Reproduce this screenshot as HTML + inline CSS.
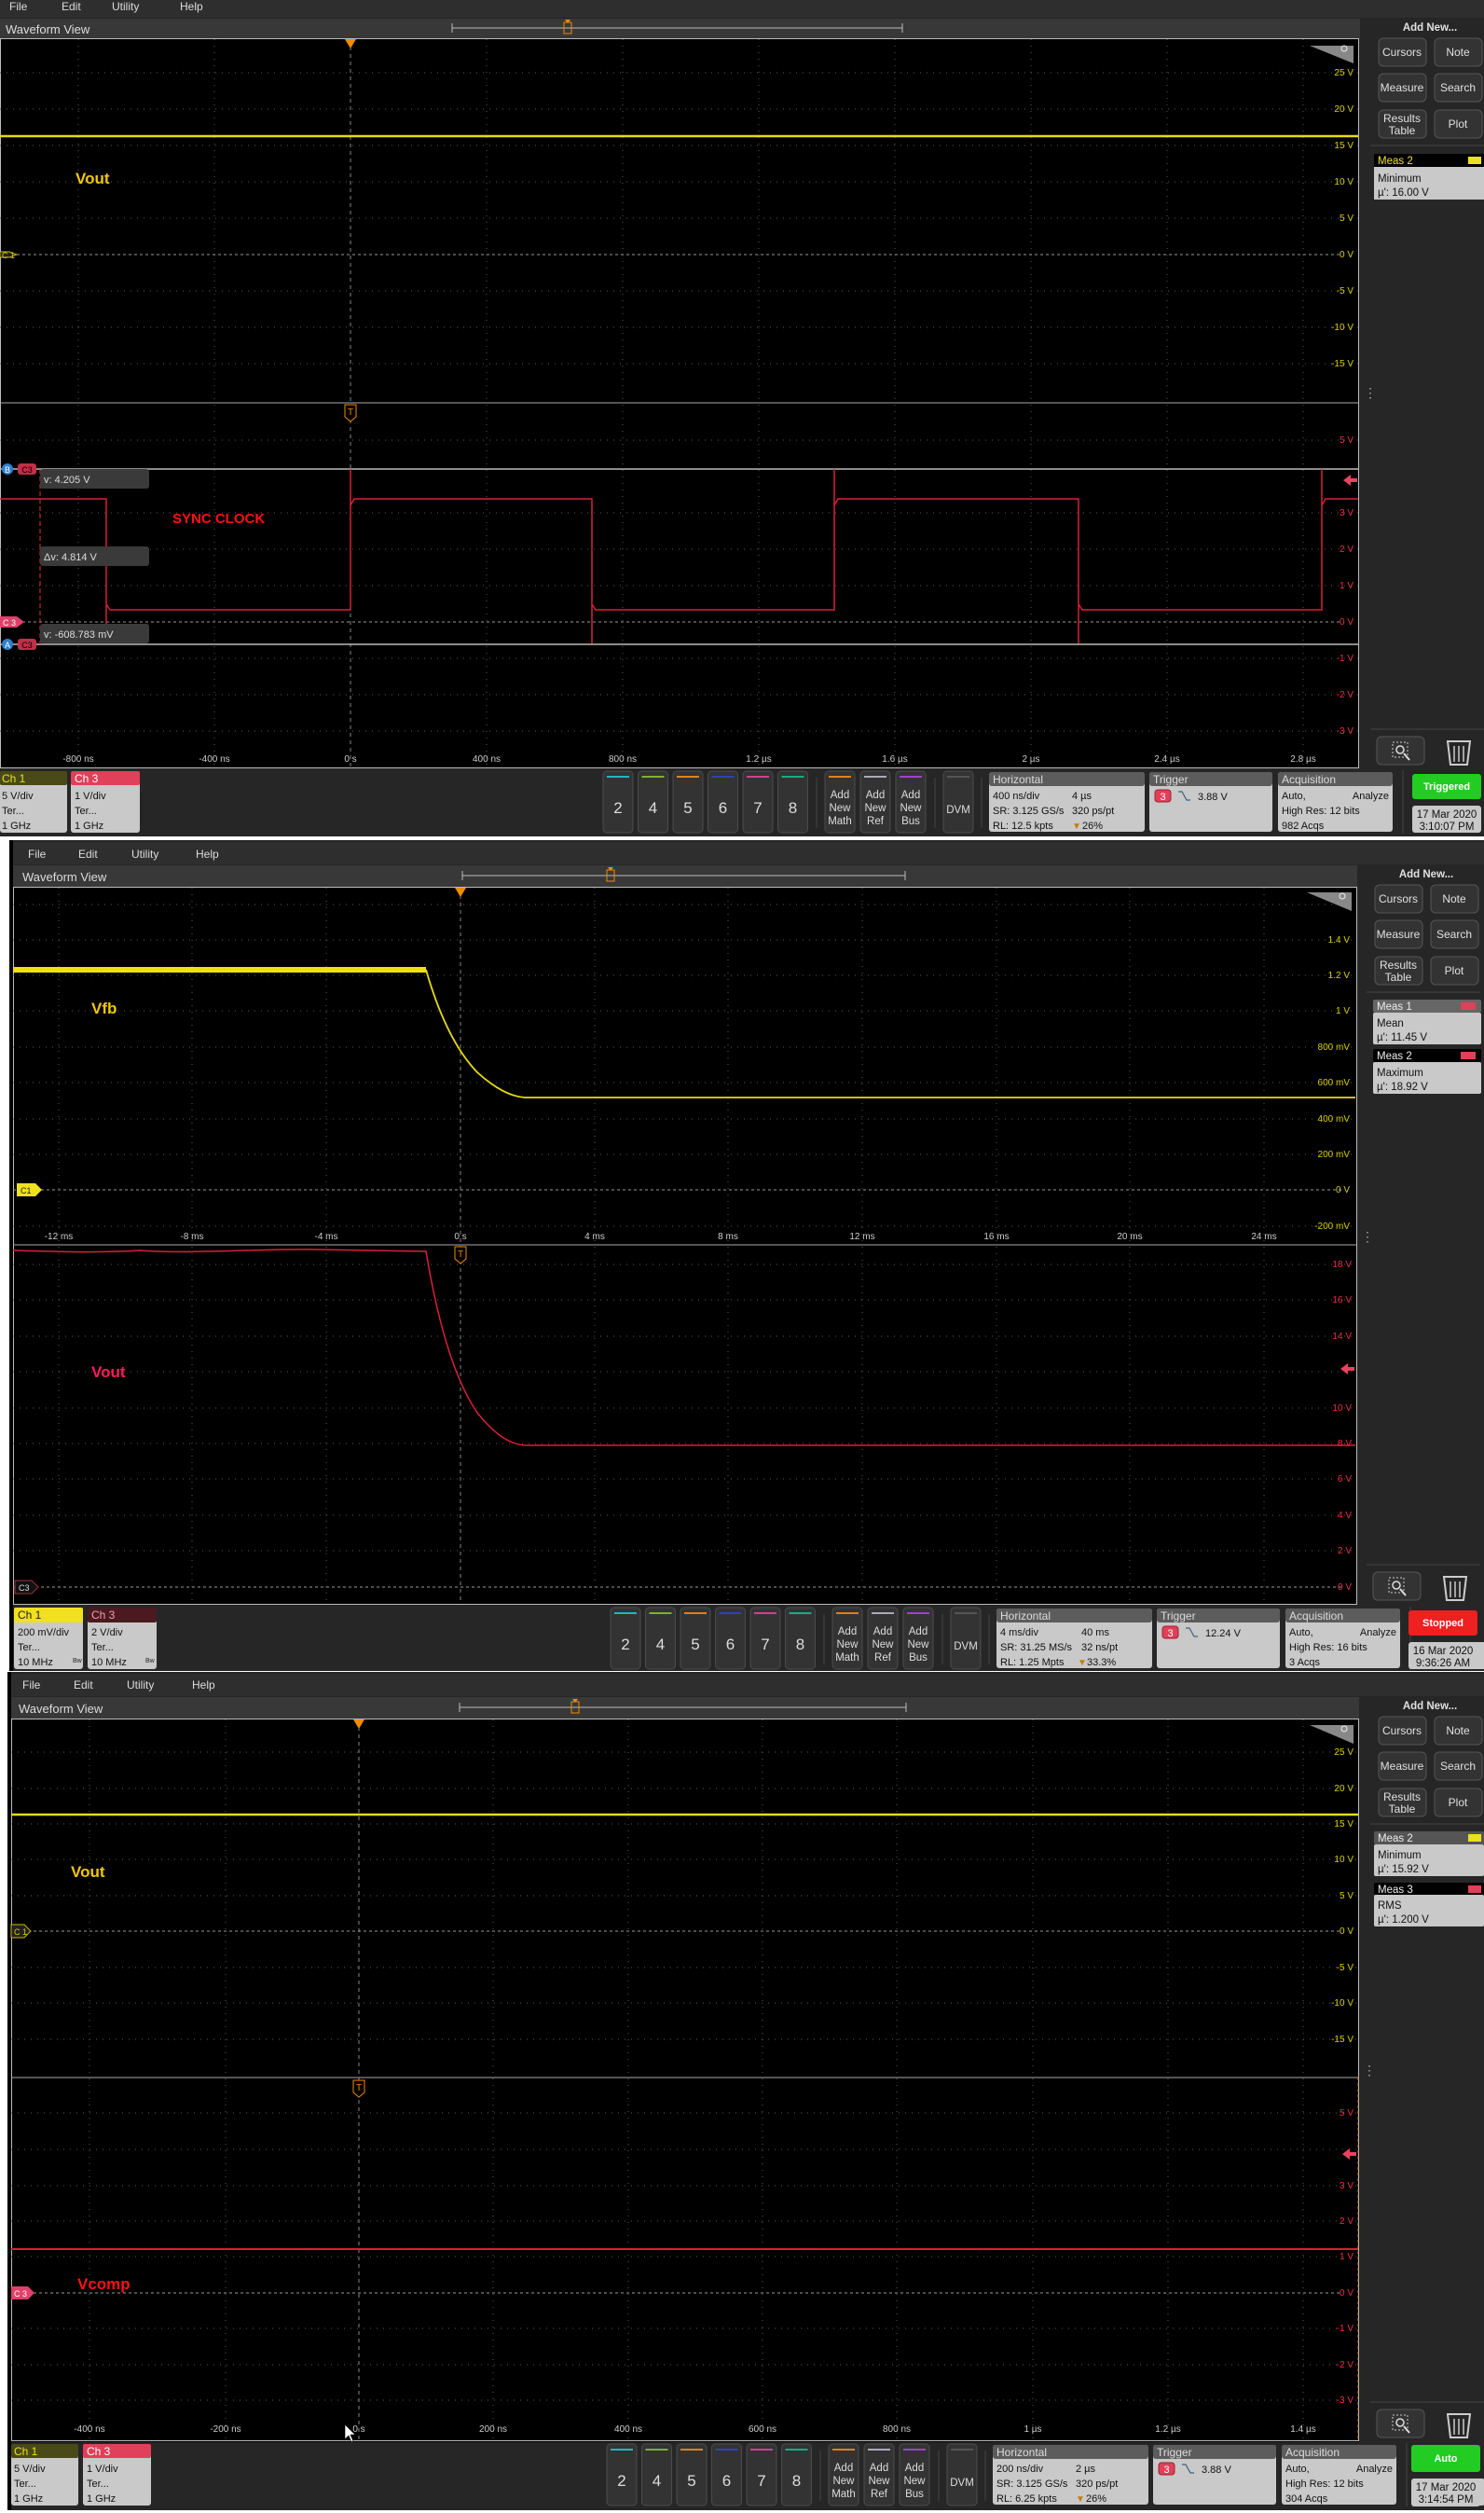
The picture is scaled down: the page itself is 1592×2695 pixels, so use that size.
<!DOCTYPE html>
<html><head><meta charset="utf-8"><style>
html,body{margin:0;padding:0;background:#fff}
svg{display:block;font-family:"Liberation Sans",sans-serif}
.m{fill:#ddd;font-size:12px}
.t{fill:#ddd;font-size:13px}
.ay{fill:#d8cf00;font-size:10px;text-anchor:end}
.ar{fill:#e8304e;font-size:10px;text-anchor:end}
.tl{fill:#ccc;font-size:10px;text-anchor:middle}
.g{stroke:#5a5a5a;stroke-width:1;stroke-dasharray:1 6}
.z{stroke:#9a9a9a;stroke-width:1;stroke-dasharray:3 3}
.sb{fill:#333;stroke:#555;rx:5}
.sbt{fill:#e0e0e0;font-size:12px;text-anchor:middle}
.bt{fill:#333;stroke:#4c4c4c;rx:4}
.bn{fill:#ddd;font-size:17px;text-anchor:middle}
.bs{fill:#ddd;font-size:11.5px;text-anchor:middle}
.hd{fill:#ddd;font-size:12px}
.bd{fill:#111;font-size:11px}
</style></head><body>
<svg width="1592" height="2695" viewBox="0 0 1592 2695" xmlns="http://www.w3.org/2000/svg">
<defs>
<g id="sideBtns">
 <text x="1534" y="13" class="sbt" font-weight="bold" style="font-size:11.5px">Add New...</text>
 <rect x="1479" y="21" width="51" height="30" class="sb"/><text x="1504" y="40" class="sbt">Cursors</text>
 <rect x="1539" y="21" width="51" height="30" class="sb"/><text x="1564" y="40" class="sbt">Note</text>
 <rect x="1479" y="59" width="51" height="30" class="sb"/><text x="1504" y="78" class="sbt">Measure</text>
 <rect x="1539" y="59" width="51" height="30" class="sb"/><text x="1564" y="78" class="sbt">Search</text>
 <rect x="1479" y="98" width="51" height="30" class="sb"/><text x="1504" y="111" class="sbt">Results</text><text x="1504" y="124" class="sbt">Table</text>
 <rect x="1539" y="98" width="51" height="30" class="sb"/><text x="1564" y="117" class="sbt">Plot</text>
 <line x1="1470" y1="136" x2="1592" y2="136" stroke="#444"/>
</g>
<g id="sideIcons">
 <rect x="1477" y="0" width="51" height="30" class="sb"/>
 <rect x="1494" y="6" width="16" height="16" fill="none" stroke="#ccc" stroke-dasharray="2 2"/>
 <circle cx="1502" cy="14" r="4" fill="none" stroke="#ddd" stroke-width="1.5"/>
 <path d="M1506 18 L1512 25" stroke="#ddd" stroke-width="2"/>
 <path d="M1553 5 H1577 L1574 30 H1556 Z" fill="none" stroke="#ccc" stroke-width="2"/>
 <path d="M1560 10 V27 M1565 10 V27 M1570 10 V27" stroke="#ccc" stroke-width="1.5"/>
 <line x1="1470" y1="-8" x2="1592" y2="-8" stroke="#444"/>
</g>
<g id="bar">
 <rect x="647" y="1" width="32" height="66" class="bt"/><line x1="651" y1="7" x2="675" y2="7" stroke="#1fb8c0" stroke-width="2"/><text x="663" y="46" class="bn">2</text>
 <rect x="684.5" y="1" width="32" height="66" class="bt"/><line x1="688.5" y1="7" x2="712.5" y2="7" stroke="#80b030" stroke-width="2"/><text x="700.5" y="46" class="bn">4</text>
 <rect x="722" y="1" width="32" height="66" class="bt"/><line x1="726" y1="7" x2="750" y2="7" stroke="#e08020" stroke-width="2"/><text x="738" y="46" class="bn">5</text>
 <rect x="759.5" y="1" width="32" height="66" class="bt"/><line x1="763.5" y1="7" x2="787.5" y2="7" stroke="#3040c0" stroke-width="2"/><text x="775.5" y="46" class="bn">6</text>
 <rect x="797" y="1" width="32" height="66" class="bt"/><line x1="801" y1="7" x2="825" y2="7" stroke="#d04090" stroke-width="2"/><text x="813" y="46" class="bn">7</text>
 <rect x="834.5" y="1" width="32" height="66" class="bt"/><line x1="838.5" y1="7" x2="862.5" y2="7" stroke="#10b080" stroke-width="2"/><text x="850.5" y="46" class="bn">8</text>
 <line x1="876" y1="8" x2="876" y2="62" stroke="#444"/>
 <rect x="885" y="1" width="32" height="66" class="bt"/><line x1="889" y1="7" x2="913" y2="7" stroke="#e08020" stroke-width="2"/><text x="901" y="30" class="bs">Add</text><text x="901" y="44" class="bs">New</text><text x="901" y="58" class="bs">Math</text>
 <rect x="923" y="1" width="32" height="66" class="bt"/><line x1="927" y1="7" x2="951" y2="7" stroke="#aab" stroke-width="2"/><text x="939" y="30" class="bs">Add</text><text x="939" y="44" class="bs">New</text><text x="939" y="58" class="bs">Ref</text>
 <rect x="961" y="1" width="32" height="66" class="bt"/><line x1="965" y1="7" x2="989" y2="7" stroke="#a040d0" stroke-width="2"/><text x="977" y="30" class="bs">Add</text><text x="977" y="44" class="bs">New</text><text x="977" y="58" class="bs">Bus</text>
 <line x1="1003" y1="8" x2="1003" y2="62" stroke="#444"/>
 <rect x="1012" y="1" width="32" height="66" class="bt"/><line x1="1016" y1="7" x2="1040" y2="7" stroke="#555" stroke-width="2"/><text x="1028" y="46" class="bs">DVM</text>
 <line x1="1053" y1="8" x2="1053" y2="62" stroke="#444"/>
 <rect x="1061" y="2" width="167" height="64" rx="3" fill="#c9c9c9"/><rect x="1061" y="2" width="167" height="15" rx="3" fill="#5c5c5c"/><text x="1065" y="14" class="hd">Horizontal</text>
 <rect x="1233" y="2" width="132" height="64" rx="3" fill="#c9c9c9"/><rect x="1233" y="2" width="132" height="15" rx="3" fill="#5c5c5c"/><text x="1237" y="14" class="hd">Trigger</text>
 <rect x="1239" y="21" width="17" height="13" rx="3" fill="#e0405a" stroke="#a02030"/><text x="1247.5" y="32" style="fill:#fff;font-size:11px;text-anchor:middle">3</text>
 <path d="M1264 23 L1268 23 L1273 32 L1277 32" stroke="#406080" fill="none" stroke-width="1.2"/>
 <rect x="1371" y="2" width="123" height="64" rx="3" fill="#c9c9c9"/><rect x="1371" y="2" width="123" height="15" rx="3" fill="#5c5c5c"/><text x="1375" y="14" class="hd">Acquisition</text>
 <line x1="1505" y1="0" x2="1505" y2="68" stroke="#444"/>
 <rect x="1515" y="38" width="74" height="29" rx="3" fill="#c9c9c9"/>
</g>
</defs>

<!-- ================= PANEL 1 ================= -->
<rect x="0" y="0" width="1592" height="897" fill="#262626"/>
<rect x="0" y="0" width="1592" height="19" fill="#2e2e2e"/>
<text x="10" y="11" class="m">File</text><text x="66" y="11" class="m">Edit</text><text x="120" y="11" class="m">Utility</text><text x="193" y="11" class="m">Help</text>
<rect x="0" y="20" width="1459" height="21" fill="#383838"/>
<text x="6" y="36" class="t">Waveform View</text>
<path d="M485 25 V35 M485 30 H968 M968 25 V35" stroke="#bbb" fill="none"/>
<rect x="605" y="24" width="8" height="12" fill="none" stroke="#f08c00"/><path d="M606 21 H612 L609 25Z" fill="#f08c00"/>
<rect x="0" y="41" width="1458" height="783" fill="#000"/>
<rect x="0.5" y="41.5" width="1457" height="782" fill="none" stroke="#bbb"/>
<g class="g">
 <line x1="84" y1="42" x2="84" y2="822"/><line x1="230" y1="42" x2="230" y2="822"/><line x1="522" y1="42" x2="522" y2="822"/><line x1="668" y1="42" x2="668" y2="822"/><line x1="814" y1="42" x2="814" y2="822"/><line x1="960" y1="42" x2="960" y2="822"/><line x1="1106" y1="42" x2="1106" y2="822"/><line x1="1252" y1="42" x2="1252" y2="822"/><line x1="1398" y1="42" x2="1398" y2="822"/>
 <line x1="0" y1="78" x2="1457" y2="78"/><line x1="0" y1="117" x2="1457" y2="117"/><line x1="0" y1="156" x2="1457" y2="156"/><line x1="0" y1="195" x2="1457" y2="195"/><line x1="0" y1="234" x2="1457" y2="234"/><line x1="0" y1="312" x2="1457" y2="312"/><line x1="0" y1="351" x2="1457" y2="351"/><line x1="0" y1="390" x2="1457" y2="390"/>
 <line x1="0" y1="472" x2="1457" y2="472"/><line x1="0" y1="550" x2="1457" y2="550"/><line x1="0" y1="589" x2="1457" y2="589"/><line x1="0" y1="628" x2="1457" y2="628"/><line x1="0" y1="706" x2="1457" y2="706"/><line x1="0" y1="745" x2="1457" y2="745"/><line x1="0" y1="784" x2="1457" y2="784"/>
</g>
<line x1="376" y1="42" x2="376" y2="822" stroke="#888" stroke-dasharray="4 4"/>
<line x1="0" y1="273" x2="1440" y2="273" class="z"/>
<line x1="0" y1="667" x2="1440" y2="667" class="z"/>
<line x1="0" y1="432" x2="1457" y2="432" stroke="#aaa"/>
<path d="M370 42 H382 L376 52Z" fill="#f08c00"/>
<path d="M1405 49 H1452 L1452 68Z" fill="#888"/><circle cx="1442" cy="52" r="3" fill="none" stroke="#eee"/>
<text x="1452" y="81" class="ay">25 V</text><text x="1452" y="120" class="ay">20 V</text><text x="1452" y="159" class="ay">15 V</text><text x="1452" y="198" class="ay">10 V</text><text x="1452" y="237" class="ay">5 V</text><text x="1452" y="276" class="ay">0 V</text><text x="1452" y="315" class="ay">-5 V</text><text x="1452" y="354" class="ay">-10 V</text><text x="1452" y="393" class="ay">-15 V</text>
<text x="1452" y="475" class="ar">5 V</text><text x="1452" y="553" class="ar">3 V</text><text x="1452" y="592" class="ar">2 V</text><text x="1452" y="631" class="ar">1 V</text><text x="1452" y="670" class="ar">0 V</text><text x="1452" y="709" class="ar">-1 V</text><text x="1452" y="748" class="ar">-2 V</text><text x="1452" y="787" class="ar">-3 V</text>
<text x="84" y="817" class="tl">-800 ns</text><text x="230" y="817" class="tl">-400 ns</text><text x="376" y="817" class="tl">0 s</text><text x="522" y="817" class="tl">400 ns</text><text x="668" y="817" class="tl">800 ns</text><text x="814" y="817" class="tl">1.2 µs</text><text x="960" y="817" class="tl">1.6 µs</text><text x="1106" y="817" class="tl">2 µs</text><text x="1252" y="817" class="tl">2.4 µs</text><text x="1398" y="817" class="tl">2.8 µs</text>
<line x1="0" y1="146" x2="1457" y2="146" stroke="#e6dc10" stroke-width="2.5"/>
<text x="81" y="197" style="fill:#f0c800;font-size:17px;font-weight:bold">Vout</text>
<path d="M0 270 H10 L18 273 L10 276 H0Z" fill="#222" stroke="#c8b800"/><text x="2" y="277" style="fill:#d8cf00;font-size:9px">C 1</text>
<path d="M370 434 H382 V447 L376 452 L370 447Z" fill="#000" stroke="#f08c00"/><text x="376" y="445" style="fill:#f08c00;font-size:10px;text-anchor:middle">T</text>
<line x1="0" y1="503" x2="1457" y2="503" stroke="#bbb" stroke-width="1.5"/>
<line x1="0" y1="691" x2="1457" y2="691" stroke="#bbb" stroke-width="1.5"/>
<line x1="43" y1="503" x2="43" y2="691" stroke="#e03050" stroke-dasharray="5 3"/>
<path d="M0 535 H114 V690 V648 L118 654 H376 V503 V542 L380 535 H635 V690 V648 L639 654 H895 V503 V542 L899 535 H1157 V690 V648 L1161 654 H1418 V503 V542 L1422 535 H1457" fill="none" stroke="#d82038" stroke-width="1.5"/>
<text x="185" y="561" style="fill:#ff1010;font-size:15px;font-weight:bold">SYNC CLOCK</text>
<rect x="43" y="503" width="117" height="21" rx="3" fill="#3a3a3a"/><text x="47" y="518" style="fill:#ddd;font-size:11px">v: 4.205 V</text>
<rect x="43" y="586" width="117" height="21" rx="3" fill="#3a3a3a"/><text x="47" y="601" style="fill:#ddd;font-size:11px">Δv: 4.814 V</text>
<rect x="43" y="669" width="117" height="21" rx="3" fill="#3a3a3a"/><text x="47" y="684" style="fill:#ddd;font-size:11px">v: -608.783 mV</text>
<circle cx="8" cy="503" r="6" fill="#3080d0"/><text x="8" y="507" style="fill:#fff;font-size:9px;text-anchor:middle">B</text>
<rect x="19" y="497" width="20" height="12" rx="3" fill="#c03048"/><text x="29" y="507" style="fill:#000;font-size:9px;text-anchor:middle">C3</text>
<circle cx="8" cy="691" r="6" fill="#3080d0"/><text x="8" y="695" style="fill:#fff;font-size:9px;text-anchor:middle">A</text>
<rect x="19" y="685" width="20" height="12" rx="3" fill="#c03048"/><text x="29" y="695" style="fill:#000;font-size:9px;text-anchor:middle">C3</text>
<path d="M0 661 H18 L26 667 L18 673 H0Z" fill="#e0406a"/><text x="3" y="671" style="fill:#fff;font-size:9px">C 3</text>
<path d="M1441 515 L1449 509 V513 H1456 V517 H1449 V521Z" fill="#f04060"/>
<text x="1463" y="426" style="fill:#aaa;font-size:14px">⋮</text>
<use href="#sideBtns" transform="translate(0,20)"/>
<rect x="1474" y="165" width="118" height="14" fill="#000"/><text x="1478" y="176" style="fill:#f0e020;font-size:11.5px">Meas 2</text><rect x="1575" y="168" width="14" height="8" fill="#e8e020"/>
<rect x="1474" y="179" width="118" height="35" fill="#c9c9c9"/><text x="1478" y="195" class="bd" style="font-size:11.5px">Minimum</text><text x="1478" y="210" class="bd" style="font-size:11.5px">µ': 16.00 V</text>
<use href="#sideIcons" transform="translate(0,790)"/>
<g transform="translate(0,826)">
 <use href="#bar"/>
 <rect x="0" y="1" width="72" height="66" rx="3" fill="#c9c9c9"/><rect x="0" y="1" width="72" height="15" rx="2" fill="#4a4a18"/><text x="2" y="13" style="fill:#e8e020;font-size:12px">Ch 1</text>
 <text x="2" y="31" class="bd">5 V/div</text><text x="2" y="47" class="bd">Ter...</text><text x="2" y="63" class="bd">1 GHz</text>
 <rect x="76" y="1" width="74" height="66" rx="3" fill="#c9c9c9"/><rect x="76" y="1" width="74" height="15" rx="2" fill="#e0405a"/><text x="80" y="13" style="fill:#fff;font-size:12px">Ch 3</text>
 <text x="80" y="31" class="bd">1 V/div</text><text x="80" y="47" class="bd">Ter...</text><text x="80" y="63" class="bd">1 GHz</text>
 <text x="1065" y="31" class="bd">400 ns/div</text><text x="1150" y="31" class="bd">4 µs</text><text x="1065" y="47" class="bd">SR: 3.125 GS/s</text><text x="1150" y="47" class="bd">320 ps/pt</text><text x="1065" y="63" class="bd">RL: 12.5 kpts</text><text x="1150" y="63" style="fill:#c08000;font-size:10px">▼</text><text x="1161" y="63" class="bd">26%</text>
 <text x="1285" y="32" class="bd">3.88 V</text>
 <text x="1375" y="31" class="bd">Auto,</text><text x="1490" y="31" class="bd" text-anchor="end">Analyze</text><text x="1375" y="47" class="bd">High Res: 12 bits</text><text x="1375" y="63" class="bd">982 Acqs</text>
 <rect x="1515" y="4" width="74" height="27" rx="3" fill="#22cc22"/><text x="1552" y="21" style="fill:#fff;font-size:11px;font-weight:bold;text-anchor:middle">Triggered</text>
 <text x="1552" y="51" class="bd" text-anchor="middle" style="font-size:11.5px">17 Mar 2020</text><text x="1552" y="64" class="bd" text-anchor="middle" style="font-size:11.5px">3:10:07 PM</text>
</g>

<!-- ================= PANEL 2 ================= -->
<rect x="10" y="901" width="1582" height="891" fill="#262626"/>
<rect x="10" y="901" width="4" height="891" fill="#000"/>
<rect x="14" y="903" width="1578" height="24" fill="#2e2e2e"/>
<text x="30" y="920" class="m">File</text><text x="84" y="920" class="m">Edit</text><text x="141" y="920" class="m">Utility</text><text x="210" y="920" class="m">Help</text>
<rect x="14" y="928" width="1442" height="23" fill="#383838"/>
<text x="24" y="945" class="t">Waveform View</text>
<path d="M496 934 V944 M496 939 H971 M971 934 V944" stroke="#bbb" fill="none"/>
<rect x="651" y="933" width="8" height="12" fill="none" stroke="#f08c00"/><path d="M652 930 H658 L655 934Z" fill="#f08c00"/>
<rect x="14" y="951" width="1442" height="770" fill="#000"/>
<rect x="14.5" y="951.5" width="1441" height="769" fill="none" stroke="#bbb"/>
<g class="g">
 <line x1="63" y1="952" x2="63" y2="1720"/><line x1="206" y1="952" x2="206" y2="1720"/><line x1="350" y1="952" x2="350" y2="1720"/><line x1="638" y1="952" x2="638" y2="1720"/><line x1="781" y1="952" x2="781" y2="1720"/><line x1="925" y1="952" x2="925" y2="1720"/><line x1="1069" y1="952" x2="1069" y2="1720"/><line x1="1212" y1="952" x2="1212" y2="1720"/><line x1="1356" y1="952" x2="1356" y2="1720"/>
 <line x1="14" y1="970" x2="1454" y2="970"/><line x1="14" y1="1008" x2="1454" y2="1008"/><line x1="14" y1="1046" x2="1454" y2="1046"/><line x1="14" y1="1084" x2="1454" y2="1084"/><line x1="14" y1="1123" x2="1454" y2="1123"/><line x1="14" y1="1161" x2="1454" y2="1161"/><line x1="14" y1="1200" x2="1454" y2="1200"/><line x1="14" y1="1238" x2="1454" y2="1238"/><line x1="14" y1="1315" x2="1454" y2="1315"/>
 <line x1="14" y1="1356" x2="1454" y2="1356"/><line x1="14" y1="1394" x2="1454" y2="1394"/><line x1="14" y1="1433" x2="1454" y2="1433"/><line x1="14" y1="1471" x2="1454" y2="1471"/><line x1="14" y1="1510" x2="1454" y2="1510"/><line x1="14" y1="1548" x2="1454" y2="1548"/><line x1="14" y1="1586" x2="1454" y2="1586"/><line x1="14" y1="1625" x2="1454" y2="1625"/><line x1="14" y1="1663" x2="1454" y2="1663"/>
</g>
<line x1="494" y1="952" x2="494" y2="1720" stroke="#888" stroke-dasharray="4 4"/>
<line x1="14" y1="1276" x2="1440" y2="1276" class="z"/>
<line x1="14" y1="1702" x2="1440" y2="1702" class="z"/>
<line x1="14" y1="1335" x2="1456" y2="1335" stroke="#aaa"/>
<path d="M488 952 H500 L494 962Z" fill="#f08c00"/>
<path d="M1402 957 H1450 L1450 977Z" fill="#888"/><circle cx="1440" cy="961" r="3" fill="none" stroke="#eee"/>
<text x="1448" y="1011" class="ay">1.4 V</text><text x="1448" y="1049" class="ay">1.2 V</text><text x="1448" y="1087" class="ay">1 V</text><text x="1448" y="1126" class="ay">800 mV</text><text x="1448" y="1164" class="ay">600 mV</text><text x="1448" y="1203" class="ay">400 mV</text><text x="1448" y="1241" class="ay">200 mV</text><text x="1448" y="1279" class="ay">0 V</text><text x="1448" y="1318" class="ay">-200 mV</text>
<text x="1450" y="1359" class="ar">18 V</text><text x="1450" y="1397" class="ar">16 V</text><text x="1450" y="1436" class="ar">14 V</text><text x="1450" y="1513" class="ar">10 V</text><text x="1450" y="1551" class="ar">8 V</text><text x="1450" y="1589" class="ar">6 V</text><text x="1450" y="1628" class="ar">4 V</text><text x="1450" y="1666" class="ar">2 V</text><text x="1450" y="1705" class="ar">0 V</text>
<text x="63" y="1329" class="tl">-12 ms</text><text x="206" y="1329" class="tl">-8 ms</text><text x="350" y="1329" class="tl">-4 ms</text><text x="494" y="1329" class="tl">0 s</text><text x="638" y="1329" class="tl">4 ms</text><text x="781" y="1329" class="tl">8 ms</text><text x="925" y="1329" class="tl">12 ms</text><text x="1069" y="1329" class="tl">16 ms</text><text x="1212" y="1329" class="tl">20 ms</text><text x="1356" y="1329" class="tl">24 ms</text>
<path d="M14 1040 H457" stroke="#f0e010" stroke-width="6"/>
<path d="M457 1040 C470 1085 488 1125 512 1150 C532 1168 548 1176 563 1177 L1454 1177" fill="none" stroke="#e6dc10" stroke-width="1.8"/>
<text x="98" y="1087" style="fill:#f0c800;font-size:17px;font-weight:bold">Vfb</text>
<path d="M18 1269 H38 L45 1276 L38 1283 H18Z" fill="#f0e020"/><text x="22" y="1280" style="fill:#222;font-size:9px">C1</text>
<path d="M14 1341 C60 1342 100 1344 150 1341 C200 1345 280 1339 340 1340 L457 1342 C470 1420 488 1480 512 1515 C532 1540 548 1549 563 1550 L1454 1550" fill="none" stroke="#d82038" stroke-width="1.5"/>
<path d="M488 1337 H500 V1350 L494 1355 L488 1350Z" fill="#000" stroke="#f08c00"/><text x="494" y="1348" style="fill:#f08c00;font-size:10px;text-anchor:middle">T</text>
<text x="98" y="1477" style="fill:#ff1a60;font-size:17px;font-weight:bold">Vout</text>
<path d="M16 1695 H34 L41 1702 L34 1709 H16Z" fill="#111" stroke="#a03040"/><text x="20" y="1706" style="fill:#ddd;font-size:9px">C3</text>
<path d="M1438 1468 L1446 1462 V1466 H1453 V1470 H1446 V1474Z" fill="#f04060"/>
<text x="1460" y="1331" style="fill:#aaa;font-size:14px">⋮</text>
<use href="#sideBtns" transform="translate(-4,928)"/>
<rect x="1473" y="1072" width="116" height="14" rx="2" fill="#666"/><text x="1477" y="1083" style="fill:#eee;font-size:11.5px">Meas 1</text><rect x="1567" y="1075" width="16" height="8" fill="#e0405a"/>
<rect x="1473" y="1086" width="116" height="34" rx="2" fill="#c9c9c9"/><text x="1477" y="1101" class="bd" style="font-size:11.5px">Mean</text><text x="1477" y="1116" class="bd" style="font-size:11.5px">µ': 11.45 V</text>
<rect x="1473" y="1125" width="116" height="14" rx="2" fill="#000"/><text x="1477" y="1136" style="fill:#eee;font-size:11.5px">Meas 2</text><rect x="1567" y="1128" width="16" height="8" fill="#e0405a"/>
<rect x="1473" y="1139" width="116" height="34" rx="2" fill="#c9c9c9"/><text x="1477" y="1154" class="bd" style="font-size:11.5px">Maximum</text><text x="1477" y="1169" class="bd" style="font-size:11.5px">µ': 18.92 V</text>
<use href="#sideIcons" transform="translate(-4,1686)"/>
<g transform="translate(0,1723)">
 <use href="#bar" transform="translate(8,0)"/>
 <rect x="15" y="1" width="74" height="66" rx="3" fill="#c9c9c9"/><rect x="15" y="1" width="74" height="16" rx="2" fill="#f0e020"/><text x="19" y="13" style="fill:#222;font-size:12px">Ch 1</text>
 <text x="19" y="31" class="bd">200 mV/div</text><text x="19" y="47" class="bd">Ter...</text><text x="19" y="63" class="bd">10 MHz</text><text x="78" y="60" style="fill:#222;font-size:7px">Bw</text>
 <rect x="94" y="1" width="74" height="66" rx="3" fill="#c9c9c9"/><rect x="94" y="1" width="74" height="16" rx="2" fill="#4a1a20"/><text x="98" y="13" style="fill:#f0a0b0;font-size:12px">Ch 3</text>
 <text x="98" y="31" class="bd">2 V/div</text><text x="98" y="47" class="bd">Ter...</text><text x="98" y="63" class="bd">10 MHz</text><text x="156" y="60" style="fill:#222;font-size:7px">Bw</text>
 <text x="1073" y="31" class="bd">4 ms/div</text><text x="1160" y="31" class="bd">40 ms</text><text x="1073" y="47" class="bd">SR: 31.25 MS/s</text><text x="1160" y="47" class="bd">32 ns/pt</text><text x="1073" y="63" class="bd">RL: 1.25 Mpts</text><text x="1156" y="63" style="fill:#c08000;font-size:10px">▼</text><text x="1166" y="63" class="bd">33.3%</text>
 <text x="1293" y="32" class="bd">12.24 V</text>
 <text x="1383" y="31" class="bd">Auto,</text><text x="1498" y="31" class="bd" text-anchor="end">Analyze</text><text x="1383" y="47" class="bd">High Res: 16 bits</text><text x="1383" y="63" class="bd">3 Acqs</text>
 <rect x="1511" y="4" width="74" height="27" rx="3" fill="#ee2020"/><text x="1548" y="21" style="fill:#fff;font-size:11px;font-weight:bold;text-anchor:middle">Stopped</text>
 <rect x="1511" y="38" width="74" height="29" rx="3" fill="#c9c9c9"/>
 <text x="1548" y="51" class="bd" text-anchor="middle" style="font-size:11.5px">16 Mar 2020</text><text x="1548" y="64" class="bd" text-anchor="middle" style="font-size:11.5px">9:36:26 AM</text>
</g>

<!-- ================= PANEL 3 ================= -->
<rect x="8" y="1793" width="1584" height="899" fill="#262626"/>
<rect x="8" y="1793" width="4" height="899" fill="#000"/>
<rect x="12" y="1795" width="1580" height="24" fill="#2e2e2e"/>
<text x="24" y="1811" class="m">File</text><text x="79" y="1811" class="m">Edit</text><text x="136" y="1811" class="m">Utility</text><text x="206" y="1811" class="m">Help</text>
<rect x="12" y="1820" width="1446" height="23" fill="#383838"/>
<text x="20" y="1837" class="t">Waveform View</text>
<path d="M493 1826 V1836 M493 1831 H972 M972 1826 V1836" stroke="#bbb" fill="none"/>
<rect x="613" y="1825" width="8" height="12" fill="none" stroke="#f08c00"/><path d="M614 1822 H620 L617 1826Z" fill="#f08c00"/>
<rect x="12" y="1843" width="1446" height="776" fill="#000"/>
<rect x="12.5" y="1843.5" width="1445" height="774" fill="none" stroke="#bbb"/>
<g class="g">
 <line x1="96" y1="1844" x2="96" y2="2617"/><line x1="242" y1="1844" x2="242" y2="2617"/><line x1="529" y1="1844" x2="529" y2="2617"/><line x1="674" y1="1844" x2="674" y2="2617"/><line x1="818" y1="1844" x2="818" y2="2617"/><line x1="962" y1="1844" x2="962" y2="2617"/><line x1="1108" y1="1844" x2="1108" y2="2617"/><line x1="1253" y1="1844" x2="1253" y2="2617"/><line x1="1398" y1="1844" x2="1398" y2="2617"/>
 <line x1="12" y1="1879" x2="1457" y2="1879"/><line x1="12" y1="1918" x2="1457" y2="1918"/><line x1="12" y1="1956" x2="1457" y2="1956"/><line x1="12" y1="1994" x2="1457" y2="1994"/><line x1="12" y1="2033" x2="1457" y2="2033"/><line x1="12" y1="2110" x2="1457" y2="2110"/><line x1="12" y1="2148" x2="1457" y2="2148"/><line x1="12" y1="2187" x2="1457" y2="2187"/>
 <line x1="12" y1="2266" x2="1457" y2="2266"/><line x1="12" y1="2305" x2="1457" y2="2305"/><line x1="12" y1="2344" x2="1457" y2="2344"/><line x1="12" y1="2382" x2="1457" y2="2382"/><line x1="12" y1="2420" x2="1457" y2="2420"/><line x1="12" y1="2497" x2="1457" y2="2497"/><line x1="12" y1="2536" x2="1457" y2="2536"/><line x1="12" y1="2574" x2="1457" y2="2574"/>
</g>
<line x1="385" y1="1844" x2="385" y2="2617" stroke="#888" stroke-dasharray="4 4"/>
<line x1="12" y1="2071" x2="1440" y2="2071" class="z"/>
<line x1="12" y1="2459" x2="1440" y2="2459" class="z"/>
<line x1="12" y1="2228" x2="1458" y2="2228" stroke="#aaa"/>
<line x1="1457" y1="2228" x2="1457" y2="2617" stroke="#e08020" stroke-dasharray="3 3"/>
<path d="M379 1844 H391 L385 1854Z" fill="#f08c00"/>
<path d="M1405 1850 H1452 L1452 1870Z" fill="#888"/><circle cx="1442" cy="1854" r="3" fill="none" stroke="#eee"/>
<text x="1452" y="1882" class="ay">25 V</text><text x="1452" y="1921" class="ay">20 V</text><text x="1452" y="1959" class="ay">15 V</text><text x="1452" y="1997" class="ay">10 V</text><text x="1452" y="2036" class="ay">5 V</text><text x="1452" y="2074" class="ay">0 V</text><text x="1452" y="2113" class="ay">-5 V</text><text x="1452" y="2151" class="ay">-10 V</text><text x="1452" y="2190" class="ay">-15 V</text>
<text x="1452" y="2269" class="ar">5 V</text><text x="1452" y="2347" class="ar">3 V</text><text x="1452" y="2385" class="ar">2 V</text><text x="1452" y="2423" class="ar">1 V</text><text x="1452" y="2462" class="ar">0 V</text><text x="1452" y="2500" class="ar">-1 V</text><text x="1452" y="2539" class="ar">-2 V</text><text x="1452" y="2577" class="ar">-3 V</text>
<text x="96" y="2608" class="tl">-400 ns</text><text x="242" y="2608" class="tl">-200 ns</text><text x="385" y="2608" class="tl">0 s</text><text x="529" y="2608" class="tl">200 ns</text><text x="674" y="2608" class="tl">400 ns</text><text x="818" y="2608" class="tl">600 ns</text><text x="962" y="2608" class="tl">800 ns</text><text x="1108" y="2608" class="tl">1 µs</text><text x="1253" y="2608" class="tl">1.2 µs</text><text x="1398" y="2608" class="tl">1.4 µs</text>
<line x1="12" y1="1946" x2="1457" y2="1946" stroke="#e6dc10" stroke-width="2.5"/>
<text x="76" y="2013" style="fill:#f0c800;font-size:17px;font-weight:bold">Vout</text>
<path d="M12 2064 H26 L33 2071 L26 2078 H12Z" fill="#222" stroke="#c8b800"/><text x="15" y="2075" style="fill:#d8cf00;font-size:9px">C 1</text>
<path d="M379 2231 H391 V2244 L385 2249 L379 2244Z" fill="#000" stroke="#f08c00"/><text x="385" y="2242" style="fill:#f08c00;font-size:10px;text-anchor:middle">T</text>
<line x1="12" y1="2412" x2="1457" y2="2412" stroke="#d82038" stroke-width="2"/>
<text x="83" y="2455" style="fill:#ff1010;font-size:17px;font-weight:bold">Vcomp</text>
<path d="M12 2452 H30 L37 2459 L30 2466 H12Z" fill="#e0406a"/><text x="15" y="2463" style="fill:#fff;font-size:9px">C 3</text>
<path d="M1440 2310 L1448 2304 V2308 H1455 V2312 H1448 V2316Z" fill="#f04060"/>
<text x="1462" y="2225" style="fill:#aaa;font-size:14px">⋮</text>
<use href="#sideBtns" transform="translate(0,1820)"/>
<rect x="1474" y="1964" width="118" height="14" rx="2" fill="#555"/><text x="1478" y="1975" style="fill:#eee;font-size:11.5px">Meas 2</text><rect x="1575" y="1967" width="14" height="8" fill="#e8e020"/>
<rect x="1474" y="1978" width="118" height="34" rx="2" fill="#c9c9c9"/><text x="1478" y="1993" class="bd" style="font-size:11.5px">Minimum</text><text x="1478" y="2008" class="bd" style="font-size:11.5px">µ': 15.92 V</text>
<rect x="1474" y="2019" width="118" height="13" rx="2" fill="#000"/><text x="1478" y="2030" style="fill:#eee;font-size:11.5px">Meas 3</text><rect x="1575" y="2022" width="14" height="8" fill="#e0405a"/>
<rect x="1474" y="2032" width="118" height="34" rx="2" fill="#c9c9c9"/><text x="1478" y="2047" class="bd" style="font-size:11.5px">RMS</text><text x="1478" y="2062" class="bd" style="font-size:11.5px">µ': 1.200 V</text>
<use href="#sideIcons" transform="translate(0,2584)"/>
<path d="M370 2600 L370 2616 L374 2612 L377 2619 L379 2618 L376 2611 L381 2611Z" fill="#fff" stroke="#000" stroke-width="0.6"/>
<g transform="translate(0,2620)">
 <use href="#bar" transform="translate(4,0)"/>
 <rect x="12" y="1" width="72" height="66" rx="3" fill="#c9c9c9"/><rect x="12" y="1" width="72" height="15" rx="2" fill="#4a4a18"/><text x="15" y="13" style="fill:#e8e020;font-size:12px">Ch 1</text>
 <text x="15" y="31" class="bd">5 V/div</text><text x="15" y="47" class="bd">Ter...</text><text x="15" y="63" class="bd">1 GHz</text>
 <rect x="89" y="1" width="73" height="66" rx="3" fill="#c9c9c9"/><rect x="89" y="1" width="73" height="15" rx="2" fill="#e0405a"/><text x="93" y="13" style="fill:#fff;font-size:12px">Ch 3</text>
 <text x="93" y="31" class="bd">1 V/div</text><text x="93" y="47" class="bd">Ter...</text><text x="93" y="63" class="bd">1 GHz</text>
 <text x="1069" y="31" class="bd">200 ns/div</text><text x="1154" y="31" class="bd">2 µs</text><text x="1069" y="47" class="bd">SR: 3.125 GS/s</text><text x="1154" y="47" class="bd">320 ps/pt</text><text x="1069" y="63" class="bd">RL: 6.25 kpts</text><text x="1154" y="63" style="fill:#c08000;font-size:10px">▼</text><text x="1165" y="63" class="bd">26%</text>
 <text x="1289" y="32" class="bd">3.88 V</text>
 <text x="1379" y="31" class="bd">Auto,</text><text x="1494" y="31" class="bd" text-anchor="end">Analyze</text><text x="1379" y="47" class="bd">High Res: 12 bits</text><text x="1379" y="63" class="bd">304 Acqs</text>
 <rect x="1514" y="2" width="74" height="29" rx="3" fill="#22cc22"/><text x="1551" y="20" style="fill:#fff;font-size:11px;font-weight:bold;text-anchor:middle">Auto</text>
 <rect x="1514" y="38" width="74" height="30" rx="3" fill="#c9c9c9"/>
 <text x="1551" y="51" class="bd" text-anchor="middle" style="font-size:11.5px">17 Mar 2020</text><text x="1551" y="64" class="bd" text-anchor="middle" style="font-size:11.5px">3:14:54 PM</text>
</g>
</svg>
</body></html>
